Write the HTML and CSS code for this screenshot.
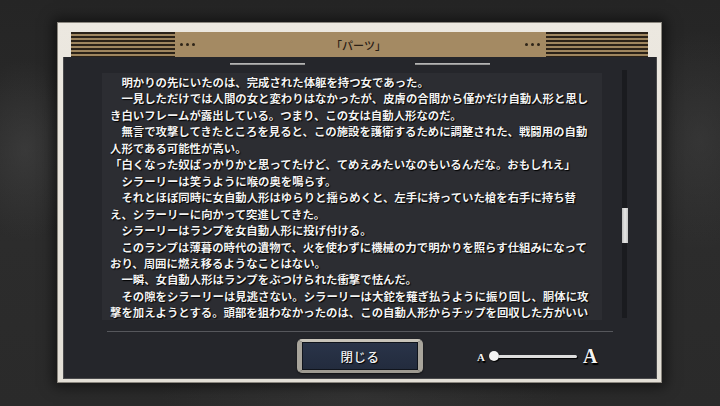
FILE: index.html
```html
<!DOCTYPE html>
<html lang="ja">
<head>
<meta charset="utf-8">
<title>パーツ</title>
<link rel="stylesheet" href="styles.css">
</head>
<body>
<div class="frame">
  <div class="head">
    <div class="stripes"></div>
    <div class="dots"><i></i><i></i><i></i></div>
    <div class="title">「パーツ」</div>
    <div class="dots"><i></i><i></i><i></i></div>
    <div class="stripes stripes-r"></div>
  </div>
  <div class="panel">
    <div class="deco"><span></span><span></span></div>
    <div class="body">
      <div class="text">
        <p class="ind">明かりの先にいたのは、完成された体躯を持つ女であった。</p>
        <p class="ind">一見しただけでは人間の女と変わりはなかったが、皮膚の合間から僅かだけ自動人形と思し<br>き白いフレームが露出している。つまり、この女は自動人形なのだ。</p>
        <p class="ind">無言で攻撃してきたところを見ると、この施設を護衛するために調整された、戦闘用の自動<br>人形である可能性が高い。</p>
        <p>「白くなった奴ばっかりかと思ってたけど、てめえみたいなのもいるんだな。おもしれえ」</p>
        <p class="ind">シラーリーは笑うように喉の奥を鳴らす。</p>
        <p class="ind">それとほぼ同時に女自動人形はゆらりと揺らめくと、左手に持っていた槍を右手に持ち替<br>え、シラーリーに向かって突進してきた。</p>
        <p class="ind">シラーリーはランプを女自動人形に投げ付ける。</p>
        <p class="ind">このランプは薄暮の時代の遺物で、火を使わずに機械の力で明かりを照らす仕組みになって<br>おり、周囲に燃え移るようなことはない。</p>
        <p class="ind">一瞬、女自動人形はランプをぶつけられた衝撃で怯んだ。</p>
        <p class="ind">その隙をシラーリーは見逃さない。シラーリーは大鉈を薙ぎ払うように振り回し、胴体に攻<br>撃を加えようとする。頭部を狙わなかったのは、この自動人形からチップを回収した方がいい</p>
      </div>
      <div class="track"><div class="thumb"></div></div>
    </div>
    <div class="sep"></div>
    <div class="foot">
      <div></div>
      <button class="close">閉じる</button>
      <div class="slider">
        <span class="a-small">A</span>
        <span class="knob"></span>
        <span class="rail"></span>
        <span class="a-big">A</span>
      </div>
    </div>
  </div>
</div>
</body>
</html>
```

FILE: styles.css
```css
html, body {
  margin: 0;
  padding: 0;
}
body {
  width: 720px;
  height: 406px;
  overflow: hidden;
  font-family: "Noto Sans CJK JP", "Noto Sans", sans-serif;
  background:
    radial-gradient(ellipse 60px 90px at 25px 150px, rgba(70,70,70,0.55), rgba(70,70,70,0) 100%),
    radial-gradient(ellipse 70px 110px at 700px 140px, rgba(65,65,65,0.5), rgba(65,65,65,0) 100%),
    radial-gradient(ellipse 200px 60px at 360px 395px, rgba(60,60,60,0.5), rgba(60,60,60,0) 100%),
    linear-gradient(#252525, #2c2c2c 60%, #2a2a2a);
}

.frame {
  margin: 22px 0 0 57px;
  width: 605px;
  height: 361px;
  box-sizing: border-box;
  padding: 9px 4px 3px 5px;
  border: 1px solid #8a867e;
  background: linear-gradient(#ece8e0, #e3dfd6);
  display: flex;
  flex-direction: column;
  box-shadow: 0 0 12px 4px rgba(0,0,0,0.5);
}

.head {
  height: 25px;
  margin: 0 9px 0 8px;
  display: flex;
  align-items: center;
  background: #a48a63;
}
.stripes {
  width: 104px;
  height: 25px;
  background: repeating-linear-gradient(to bottom, #2b2218 0 1.6px, #9f865f 1.6px 4px);
}
.stripes-r {
  width: 102px;
}
.dots {
  display: flex;
  gap: 3px;
  margin: 0 6px 0 5px;
}
.dots i {
  width: 3px;
  height: 3px;
  border-radius: 50%;
  background: #2e2418;
}
.title {
  flex: 1;
  text-align: center;
  font-size: 11px;
  font-weight: 500;
  color: #2a2015;
  padding-right: 4px;
}

.panel {
  flex: 1;
  background: #25262b;
  display: flex;
  flex-direction: column;
  box-shadow: inset 1px 0 0 #4a4a4c, inset -1px 0 0 #4a4a4c, inset 0 -1px 0 #4a4a4c;
}

.deco {
  display: flex;
  justify-content: center;
  gap: 110px;
  margin-top: 6px;
}
.deco span {
  width: 75px;
  height: 2px;
  background: linear-gradient(#c4c4c4, #838383);
}

.body {
  display: flex;
  margin-top: 5px;
  height: 250px;
}
.text {
  margin: 3px 0 0 39px;
  width: 500px;
  height: 247px;
  box-sizing: border-box;
  padding: 1px 0 0 8px;
  overflow: hidden;
  background: #2c2d32;
  white-space: nowrap;
  font-size: 11.4px;
  line-height: 16.45px;
  font-weight: 700;
  color: #f3f3f3;
  text-shadow: 1px 1px 1px #000, 0 0 1px #000;
}
.text p {
  margin: 0;
}
.text p.ind {
  text-indent: 1em;
}

.track {
  margin-left: 20px;
  width: 5px;
  height: 248px;
  background: #1a1b1f;
}
.thumb {
  margin-top: 138px;
  width: 6px;
  height: 35px;
  margin-left: -0.5px;
  background: linear-gradient(90deg, #bdbdbd, #e6e6e6 50%, #c4c4c4);
}

.sep {
  margin: 11px 0 0 44px;
  width: 506px;
  height: 1px;
  background: #56575c;
}

.foot {
  display: grid;
  grid-template-columns: 1fr 126px 1fr;
  align-items: center;
  margin-top: 7px;
}
.close {
  width: 126px;
  height: 34px;
  box-sizing: border-box;
  margin: 0;
  padding: 0;
  border-style: solid;
  border-width: 3px 5px;
  border-color: #c8c4ba #a9a59c #9e9a91 #a9a59c;
  border-radius: 5px;
  background: linear-gradient(#2a3449, #222b3d);
  box-shadow: inset 0 0 0 1px #10141c, 0 1px 2px rgba(0,0,0,0.6);
  color: #f2f2f2;
  font-family: "Noto Sans CJK JP", sans-serif;
  font-size: 12.5px;
  font-weight: 500;
  text-shadow: 1px 1px 1px #000;
  letter-spacing: 0.5px;
}

.slider {
  display: flex;
  align-items: center;
  margin-left: 54px;
  color: #f4f4f4;
  font-family: "Liberation Serif", serif;
  font-weight: 700;
  text-shadow: 1px 1px 0 #000, 1px 2px 1px #000;
}
.a-small {
  font-size: 11px;
  width: 8px;
  margin-top: 2px;
}
.knob {
  margin-left: 4px;
  width: 10px;
  height: 10px;
  border-radius: 50%;
  background: #f2f2f2;
  box-shadow: 1px 1px 1px #000;
}
.rail {
  width: 79px;
  height: 3px;
  margin-left: -1px;
  border-radius: 2px;
  background: #dcdcdc;
  box-shadow: 1px 1px 1px #000;
}
.a-big {
  margin-left: 6px;
  font-size: 20px;
  line-height: 20px;
}
```
